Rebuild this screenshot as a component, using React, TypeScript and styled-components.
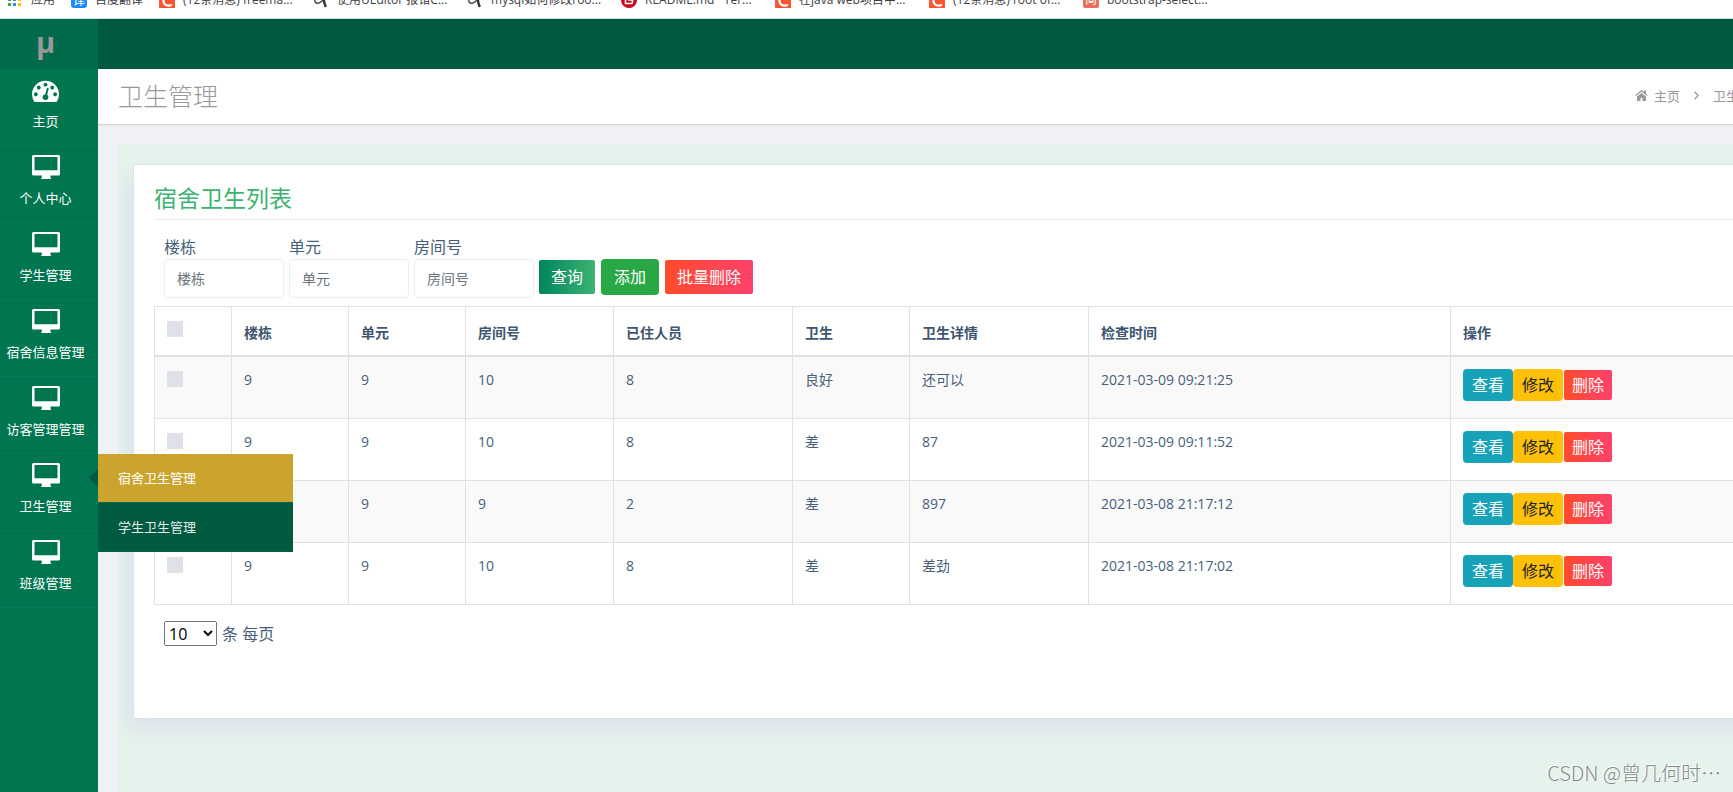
import React from "react";
import styled, { createGlobalStyle } from "styled-components";

const GlobalStyle = createGlobalStyle`
  *, *::before, *::after { box-sizing: border-box; }
  body {
    margin: 0;
    background: #eff1f5;
    color: #475f7b;
    font-family: "Open Sans", "Noto Sans CJK SC", sans-serif;
    font-size: 16px;
    line-height: 24px;
  }
  button, input, select { font-family: inherit; }
  a { color: inherit; text-decoration: none; }
`;

const Screen = styled.div`
  position: relative;
  display: flex;
  flex-direction: column;
  min-height: 100vh;
  overflow: hidden;
`;

const BookmarkBar = styled.nav`
  display: flex;
  align-items: flex-end;
  height: 19px;
  padding-left: 7px;
  background: #fff;
  border-bottom: 1px solid #d9dcdb;
  overflow: hidden;
`;

const Bookmark = styled.a<{ $wide?: boolean }>`
  display: flex;
  flex: none;
  align-items: center;
  gap: 8px;
  width: ${(p) => (p.$wide ? "138px" : "auto")};
  height: 36px;
  margin-right: 16px;
  color: #3c4043;
  font-size: 12px;
  line-height: 16px;
  white-space: nowrap;
`;

const Workspace = styled.div`
  display: flex;
  flex: 1;
  width: calc(100% + 170px);
`;

const Sidebar = styled.aside`
  position: relative;
  z-index: 2;
  flex: none;
  width: 98px;
  background: #007650;
`;

const Logo = styled.a`
  display: flex;
  align-items: center;
  justify-content: center;
  height: 50px;
  padding: 0 7px 4px 0;
  background: #006b4a;
  color: #999;
  font-size: 29px;
  font-weight: 700;
`;

const Menu = styled.ul`
  margin: 0;
  padding: 0;
  list-style: none;
`;

const MenuItem = styled.li`
  position: relative;
  height: 77px;
  border-bottom: 1px solid #007f58;
`;

const MenuLink = styled.a`
  display: flex;
  flex-direction: column;
  align-items: center;
  gap: 9px;
  padding: 9px 7px 0 0;
  color: #fff;
  font-size: 13px;
  line-height: 20px;
  white-space: nowrap;

  svg { display: block; height: 24px; }
`;

const Submenu = styled.ul`
  position: absolute;
  top: 0;
  left: 98px;
  width: 195px;
  margin: 0;
  padding: 0;
  list-style: none;

  &::before {
    content: "";
    position: absolute;
    top: 15px;
    left: -9px;
    border: solid transparent;
    border-width: 9px 9px 9px 0;
    border-right-color: #005a40;
  }
`;

const SubmenuLink = styled.a<{ $active?: boolean }>`
  display: block;
  padding: 14px 20px;
  border-bottom: 1px solid ${(p) => (p.$active ? "#006b4a" : "#006346")};
  background: ${(p) => (p.$active ? "#cba42e" : "#005a40")};
  color: ${(p) => (p.$active ? "#fff" : "#e2ece8")};
  font-size: 13px;
  line-height: 20px;
`;

const Main = styled.main`
  display: flex;
  flex: 1;
  flex-direction: column;
  min-width: 0;
`;

const TopBar = styled.header`
  height: 50px;
  background: #005a40;
`;

const PageHead = styled.div`
  display: flex;
  align-items: center;
  justify-content: space-between;
  height: 56px;
  padding: 0 138px 2px 20px;
  background: #fff;
  border-bottom: 1px solid #d6d8da;
  box-shadow: 0 1px 2px rgba(0, 0, 0, 0.06);
`;

const PageTitle = styled.h1`
  margin: 0;
  color: #999;
  font-size: 25px;
  font-weight: 300;
  line-height: 32px;
`;

const Breadcrumb = styled.nav`
  display: flex;
  align-items: center;
  color: #999;
  font-size: 13px;
  line-height: 20px;
  white-space: nowrap;

  a { display: flex; align-items: center; gap: 6px; }
  > svg { margin: 0 14px; }
`;

const Content = styled.section`
  flex: 1;
  margin: 19px 20px 0;
  padding: 20px 15px 73px;
  background: #e6f3ec;
  overflow: hidden;
`;

const Card = styled.div`
  padding: 20px 20px 72px;
  border: 1px solid #dce3ec;
  border-radius: 3px;
  background: #fff;
  box-shadow: -8px 12px 18px 0 #dde4ea;
`;

const CardTitle = styled.h2`
  margin: 0 0 15px;
  padding-bottom: 8px;
  border-bottom: 1px solid #ececec;
  color: #3cb371;
  font-size: 23px;
  font-weight: 400;
  line-height: 26px;
`;

const Filters = styled.form`
  display: flex;
  align-items: flex-end;
  gap: 5px;
  margin-bottom: 8px;
  padding-left: 10px;
`;

const Field = styled.label`
  display: block;
  width: 120px;
`;

const TextInput = styled.input`
  display: block;
  width: 100%;
  height: 39px;
  padding: 0 12px;
  border: 1px solid #e6f3ec;
  border-radius: 4px;
  background: #fff;
  color: #475f7b;
  font-size: 14px;
  outline: none;

  &::placeholder { color: #6c757d; opacity: 1; }
`;

const tones = {
  search: "linear-gradient(to right, #00855f, #3cb371)",
  add: "#28a745",
  danger: "linear-gradient(to right, #ff4b2b, #ff416c)",
  view: "#17a2b8",
  edit: "#ffc107",
};

const Button = styled.button<{ $tone: keyof typeof tones; $small?: boolean }>`
  height: ${(p) => (p.$small ? 32 : 36) - (p.$tone === "search" || p.$tone === "danger" ? 2 : 0)}px;
  padding: 0 ${(p) => (p.$small ? 8 : p.$tone === "add" ? 13 : 12)}px;
  border: 0;
  border-radius: ${(p) => (p.$tone === "search" || p.$tone === "danger" ? 2 : 4)}px;
  background: ${(p) => tones[p.$tone]};
  color: ${(p) => (p.$tone === "edit" ? "#212529" : "#fff")};
  font-size: 16px;
  line-height: 24px;
  white-space: nowrap;
  cursor: pointer;
`;

const FilterActions = styled.div`
  display: flex;
  align-items: center;
  gap: 6px;
  height: 39px;
  padding-bottom: 3px;
`;

const RowActions = styled.div`
  display: flex;
  align-items: center;

  button { width: 50px; }
  button:last-child { width: 48px; margin-left: 1px; }
`;

const Table = styled.table`
  width: 100%;
  border-collapse: collapse;
  table-layout: fixed;
  font-size: 14px;
  line-height: 21px;

  th, td {
    padding: 12px;
    border: 1px solid #dee2e6;
    text-align: left;
    vertical-align: top;
  }
  th {
    height: 49px;
    border-bottom-width: 2px;
    color: #40566f;
    font-weight: 700;
    vertical-align: bottom;
  }
  th:first-child { vertical-align: top; }
  td { height: 62px; }
  tbody tr:first-child td { height: 63px; }
  tbody tr:nth-child(odd) { background: #f9f9f9; }
`;

const Tick = styled.input`
  display: block;
  width: 16px;
  height: 16px;
  margin: 2px 0 0;
  appearance: none;
  background: #dee2e6;

  &:checked { background: #3cb371; }
`;

const PageSize = styled.label`
  display: flex;
  align-items: center;
  gap: 5px;
  margin-top: 16px;
  padding-left: 10px;

  select {
    width: 53px;
    height: 25px;
    font-size: 16px;
  }
`;

const Watermark = styled.div`
  position: absolute;
  right: 12px;
  bottom: 5px;
  color: #858b88;
  font-family: "Noto Sans CJK SC", sans-serif;
  font-size: 20px;
  font-weight: 300;
  line-height: 28px;
  text-shadow: -1px -1px 0 #fff;
`;

const AppsIcon = () => (
  <svg width="16" height="16" viewBox="0 0 16 16">
    {["#ea4335", "#ea4335", "#fbbc05", "#34a853", "#4285f4", "#fbbc05", "#34a853", "#4285f4", "#fbbc05"].map((c, i) => (
      <rect key={i} x={1 + (i % 3) * 5} y={1 + Math.floor(i / 3) * 5} width="3" height="3" fill={c} />
    ))}
  </svg>
);

const BadgeSvg = styled.svg`
  flex: none;
  font-family: "Open Sans", "Noto Sans CJK SC", sans-serif;
`;

const TranslateIcon = () => (
  <BadgeSvg width="16" height="16" viewBox="0 0 16 16">
    <rect width="16" height="16" rx="3" fill="#1a8bff" />
    <text x="8" y="13" textAnchor="middle" fontSize="12" fill="#fff">译</text>
  </BadgeSvg>
);

const CIcon = () => (
  <BadgeSvg width="16" height="16" viewBox="0 0 16 16">
    <rect width="16" height="16" fill="#fc5531" />
    <path d="M12.4 4.6C10.6 2.7 5 3 4.4 8c-.2 6 5.400 6.600 8.400 4.600" fill="none" stroke="#fff" strokeWidth="2.200" />
  </BadgeSvg>
);

const SearchCurlIcon = () => (
  <BadgeSvg width="16" height="16" viewBox="0 0 16 16">
    <path d="M2 6c-1 4 1 6 4 5 3-1 5-4 5-8" fill="none" stroke="#555" strokeWidth="1.600" />
    <path d="M11 3c-.6 4 0 8 1.800 12" fill="none" stroke="#333" strokeWidth="2.400" />
  </BadgeSvg>
);

const GiteeIcon = () => (
  <BadgeSvg width="16" height="16" viewBox="0 0 16 16">
    <circle cx="8" cy="8" r="8" fill="#d0021b" />
    <path d="M12 4.500H7Q4.500 4.500 4.500 7v4.500H10Q11.500 11.500 11.500 10V8H7" fill="none" stroke="#fff" strokeWidth="1.600" />
  </BadgeSvg>
);

const JianIcon = () => (
  <BadgeSvg width="16" height="16" viewBox="0 0 16 16">
    <rect width="16" height="16" rx="2" fill="#ea6f5a" />
    <text x="8" y="12" textAnchor="middle" fontSize="12" fill="#fff">简</text>
  </BadgeSvg>
);

const DashboardIcon = () => (
  <svg width="27" viewBox="0 162 1792 1592" fill="#fff">
    <path d="M384 1152q0-53-37.500-90.500t-90.500-37.500-90.500 37.500-37.500 90.500 37.500 90.500 90.500 37.500 90.500-37.500 37.500-90.500zm192-448q0-53-37.500-90.500t-90.500-37.500-90.500 37.500-37.500 90.500 37.500 90.500 90.500 37.500 90.500-37.500 37.500-90.500zm428 481l101-382q6-26-7.500-48.500t-38.500-29.500-48 6.500-30 39.500l-101 382q-60 5-107 43.500t-63 98.500q-20 77 20 146t117 89 146-20 89-117q16-60-6-117t-72-91zm660-33q0-53-37.500-90.500t-90.500-37.500-90.500 37.500-37.500 90.500 37.500 90.500 90.500 37.500 90.500-37.500 37.500-90.500zm-640-640q0-53-37.500-90.500t-90.500-37.500-90.500 37.500-37.500 90.500 37.500 90.500 90.500 37.500 90.500-37.500 37.500-90.500zm448 192q0-53-37.500-90.500t-90.500-37.500-90.500 37.500-37.500 90.500 37.500 90.500 90.500 37.500 90.500-37.500 37.500-90.500zm320 448q0 261-141 483-19 29-54 29h-1402q-35 0-54-29-141-221-141-483 0-182 71-348t191-286 286-191 348-71 348 71 286 191 191 286 71 348z" transform="translate(0 90)" />
  </svg>
);

const MonitorIcon = () => (
  <svg width="28" viewBox="0 0 28 24" fill="#fff">
    <path fillRule="evenodd" d="M1.500 0h25q1.500 0 1.500 1.500v17.500q0 1.500-1.500 1.500H18.500v2l.8 1.500H9l.8-1.500v-2H1.500Q0 20.500 0 19V1.500Q0 0 1.500 0zM2.500 2v13.200h23V2z" />
  </svg>
);

const HomeIcon = () => (
  <svg width="13" height="11" viewBox="0 0 26 22" fill="#999">
    <path d="M13 6L4 13v8q0 1 1 1h6v-6h4v6h6q1 0 1-1v-8zM25.600 10.500L22 7.500V1h-4v3L14.400 1q-1.400-1-2.800 0L.4 10.500l1.400 1.700L13 3.500l11.200 8.700z" />
  </svg>
);

const ChevronIcon = () => (
  <svg width="5" height="9" viewBox="0 0 5 9" fill="none" stroke="#999" strokeWidth="1.300">
    <path d="M.6.8l3.600 3.700L.6 8.200" />
  </svg>
);

const bookmarks = [
  { icon: <CIcon />, text: "(12条消息) freema..." },
  { icon: <SearchCurlIcon />, text: "使用UEditor 报错C..." },
  { icon: <SearchCurlIcon />, text: "mysql如何修改roo..." },
  { icon: <GiteeIcon />, text: "README.md · Ter..." },
  { icon: <CIcon />, text: "在java web项目中..." },
  { icon: <CIcon />, text: "(12条消息) root of..." },
  { icon: <JianIcon />, text: "bootstrap-select..." },
];

const menu = ["主页", "个人中心", "学生管理", "宿舍信息管理", "访客管理管理", "卫生管理", "班级管理"];

const columns = [
  { name: "楼栋", width: 117 },
  { name: "单元", width: 117 },
  { name: "房间号", width: 148 },
  { name: "已住人员", width: 179 },
  { name: "卫生", width: 117 },
  { name: "卫生详情", width: 179 },
  { name: "检查时间", width: 362 },
];

const rows = [
  ["9", "9", "10", "8", "良好", "还可以", "2021-03-09 09:21:25"],
  ["9", "9", "10", "8", "差", "87", "2021-03-09 09:11:52"],
  ["9", "9", "9", "2", "差", "897", "2021-03-08 21:17:12"],
  ["9", "9", "10", "8", "差", "差劲", "2021-03-08 21:17:02"],
];

export default function App() {
  return (
    <Screen>
      <GlobalStyle />
      <BookmarkBar>
        <Bookmark href="#"><AppsIcon />应用</Bookmark>
        <Bookmark href="#"><TranslateIcon />百度翻译</Bookmark>
        {bookmarks.map((b, i) => (
          <Bookmark key={i} href="#" $wide>{b.icon}{b.text}</Bookmark>
        ))}
      </BookmarkBar>
      <Workspace>
        <Sidebar>
          <Logo href="#">μ</Logo>
          <Menu>
            {menu.map((name, i) => (
              <MenuItem key={name}>
                <MenuLink href="#">
                  {i === 0 ? <DashboardIcon /> : <MonitorIcon />}
                  {name}
                </MenuLink>
                {name === "卫生管理" && (
                  <Submenu>
                    <li><SubmenuLink href="#" $active>宿舍卫生管理</SubmenuLink></li>
                    <li><SubmenuLink href="#">学生卫生管理</SubmenuLink></li>
                  </Submenu>
                )}
              </MenuItem>
            ))}
          </Menu>
        </Sidebar>
        <Main>
          <TopBar />
          <PageHead>
            <PageTitle>卫生管理</PageTitle>
            <Breadcrumb>
              <a href="#"><HomeIcon />主页</a>
              <ChevronIcon />
              <span>卫生管理</span>
            </Breadcrumb>
          </PageHead>
          <Content>
            <Card>
              <CardTitle>宿舍卫生列表</CardTitle>
              <Filters onSubmit={(e) => e.preventDefault()}>
                {["楼栋", "单元", "房间号"].map((name) => (
                  <Field key={name}>
                    {name}
                    <TextInput type="text" placeholder={name} />
                  </Field>
                ))}
                <FilterActions>
                  <Button type="submit" $tone="search">查询</Button>
                  <Button type="button" $tone="add">添加</Button>
                  <Button type="button" $tone="danger">批量删除</Button>
                </FilterActions>
              </Filters>
              <Table>
                <colgroup>
                  <col width={77} />
                  {columns.map((c) => <col key={c.name} width={c.width} />)}
                  <col />
                </colgroup>
                <thead>
                  <tr>
                    <th><Tick type="checkbox" aria-label="全选" /></th>
                    {columns.map((c) => <th key={c.name}>{c.name}</th>)}
                    <th>操作</th>
                  </tr>
                </thead>
                <tbody>
                  {rows.map((row, r) => (
                    <tr key={r}>
                      <td><Tick type="checkbox" aria-label="选择" /></td>
                      {row.map((cell, c) => <td key={c}>{cell}</td>)}
                      <td>
                        <RowActions>
                          <Button type="button" $tone="view" $small>查看</Button>
                          <Button type="button" $tone="edit" $small>修改</Button>
                          <Button type="button" $tone="danger" $small>删除</Button>
                        </RowActions>
                      </td>
                    </tr>
                  ))}
                </tbody>
              </Table>
              <PageSize>
                <select defaultValue="10">
                  <option>10</option>
                  <option>25</option>
                  <option>50</option>
                </select>
                条 每页
              </PageSize>
            </Card>
          </Content>
        </Main>
      </Workspace>
      <Watermark>CSDN @曾几何时…</Watermark>
    </Screen>
  );
}
